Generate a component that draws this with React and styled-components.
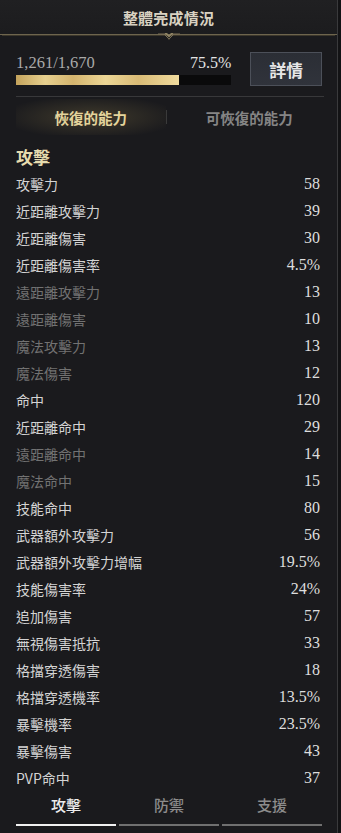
import React from "react";
import styled, { createGlobalStyle } from "styled-components";

const GlobalStyle = createGlobalStyle`
  html, body { margin: 0; padding: 0; background: #131315; }
  body { font-family: "Noto Sans CJK TC", "Noto Sans", sans-serif; }
  * { box-sizing: border-box; }
`;

const Panel = styled.div`
  position: relative;
  width: 338px;
  height: 833px;
  background: #1a1a1d;
  border-right: 1px solid #3a3a3c;
  display: flex;
  flex-direction: column;
  overflow: hidden;
`;

const Corner = styled.div`
  position: absolute;
  top: 0;
  ${(p) => (p.$side === "left" ? "left: 0;" : "right: 0;")}
  width: 0;
  height: 0;
  border-top: 6px solid #8a7f62;
  ${(p) =>
    p.$side === "left"
      ? "border-right: 6px solid transparent;"
      : "border-left: 6px solid transparent;"}
`;

const Header = styled.div`
  position: relative;
  height: 35px;
  flex: none;
  display: flex;
  align-items: center;
  justify-content: center;
  background: linear-gradient(#202022, #1c1c1e);
  border-bottom: 1px solid #6e654e;
  box-shadow: 0 3px 0 -2px #3c372b;
`;

const Title = styled.div`
  font-size: 15px;
  font-weight: 700;
  color: #d9d2c2;
  letter-spacing: 0.2px;
`;

const Ornament = styled.svg`
  position: absolute;
  left: 158px;
  bottom: -8px;
`;

const ProgressSection = styled.div`
  flex: none;
  display: flex;
  align-items: center;
  padding: 17px 15px 0 16px;
  gap: 19px;
`;

const ProgressInfo = styled.div`
  width: 216px;
  display: flex;
  flex-direction: column;
`;

const ProgressTop = styled.div`
  display: flex;
  justify-content: space-between;
  align-items: baseline;
  font-family: "Liberation Serif", "Times New Roman", serif;
  font-size: 16.5px;
  line-height: 18px;
`;

const Count = styled.span`
  color: #a9a9a9;
`;

const Percent = styled.span`
  color: #e4e4e4;
  font-size: 16px;
`;

const Bar = styled.div`
  margin-top: 3px;
  height: 10px;
  background: #0a0a0b;
`;

const BarFill = styled.div`
  height: 100%;
  background: linear-gradient(
    90deg,
    #c4a35c 0%,
    #e7d08f 18%,
    #d4b46e 35%,
    #ecd696 55%,
    #d9bb76 75%,
    #f0db9d 100%
  );
`;

const DetailButton = styled.button`
  width: 72px;
  height: 34px;
  border: 1px solid #4c5059;
  background: linear-gradient(#2b2e35, #30333b);
  color: #e6e6e6;
  font-family: "Noto Sans CJK TC", sans-serif;
  font-size: 17px;
  font-weight: 700;
  padding: 0;
`;

const Divider = styled.div`
  flex: none;
  height: 1px;
  margin: 10px 13px 0 16px;
  background: #38383a;
`;

const TopTabs = styled.div`
  flex: none;
  display: flex;
  align-items: center;
  height: 36px;
  margin: 2px 13px 0 16px;
`;

const TopTab = styled.div`
  flex: 1;
  height: 100%;
  display: flex;
  align-items: center;
  justify-content: center;
  font-size: 14.5px;
  font-weight: 700;
  color: ${(p) => (p.$active ? "#e4d49c" : "#858585")};
  background: ${(p) =>
    p.$active
      ? "radial-gradient(ellipse 60% 60% at 50% 50%, rgba(195,170,95,0.22), rgba(195,170,95,0) 100%)"
      : "none"};
  padding-left: ${(p) => (p.$active ? "0" : "8px")};
`;

const TabSep = styled.div`
  width: 1px;
  height: 14px;
  background: #3a3a3a;
`;

const List = styled.div`
  flex: 1;
  overflow: hidden;
  padding: 10px 17px 0 16px;
`;

const SectionTitle = styled.div`
  height: 25.5px;
  padding-bottom: 2px;
  display: flex;
  align-items: center;
  font-size: 17px;
  font-weight: 700;
  color: #e6dcae;
`;

const Row = styled.div`
  height: 27px;
  display: flex;
  align-items: center;
  justify-content: space-between;
`;

const Label = styled.span`
  font-size: 14px;
  color: ${(p) => (p.$dim ? "#727272" : "#d4d4d4")};
`;

const Value = styled.span`
  font-family: "Liberation Serif", "Times New Roman", serif;
  font-size: 16px;
  color: #dedede;
`;

const BottomTabs = styled.div`
  flex: none;
  height: 47px;
  display: flex;
  gap: 3px;
  padding: 0 15px 7px 16px;
`;

const BottomTab = styled.div`
  flex: 1;
  display: flex;
  align-items: center;
  justify-content: center;
  font-size: 15px;
  font-weight: 500;
  color: ${(p) => (p.$active ? "#ededed" : "#8c8c8c")};
  border-bottom: 2px solid ${(p) => (p.$active ? "#f0f0f0" : "#707070")};
  padding-bottom: 1px;
`;

const stats = [
  ["攻擊力", "58"],
  ["近距離攻擊力", "39"],
  ["近距離傷害", "30"],
  ["近距離傷害率", "4.5%"],
  ["遠距離攻擊力", "13", true],
  ["遠距離傷害", "10", true],
  ["魔法攻擊力", "13", true],
  ["魔法傷害", "12", true],
  ["命中", "120"],
  ["近距離命中", "29"],
  ["遠距離命中", "14", true],
  ["魔法命中", "15", true],
  ["技能命中", "80"],
  ["武器額外攻擊力", "56"],
  ["武器額外攻擊力增幅", "19.5%"],
  ["技能傷害率", "24%"],
  ["追加傷害", "57"],
  ["無視傷害抵抗", "33"],
  ["格擋穿透傷害", "18"],
  ["格擋穿透機率", "13.5%"],
  ["暴擊機率", "23.5%"],
  ["暴擊傷害", "43"],
  ["PVP命中", "37"],
];

export default function App() {
  const pct = 75.5;
  return (
    <>
      <GlobalStyle />
      <Panel>
        <Corner $side="left" />
        <Corner $side="right" />
        <Header>
          <Title>整體完成情況</Title>
          <Ornament width="22" height="10" viewBox="0 0 22 10">
            <path d="M0 2 L6 2 L11 7 L16 2 L22 2" fill="none" stroke="#7a6f55" strokeWidth="1" />
            <path d="M6 1 L11 5.5 L16 1 L13 1 L11 3 L9 1 Z" fill="#8f8363" />
            <path d="M9 5 L11 8 L13 5 L11 6.5 Z" fill="#6f664f" />
          </Ornament>
        </Header>
        <ProgressSection>
          <ProgressInfo>
            <ProgressTop>
              <Count>1,261/1,670</Count>
              <Percent>75.5%</Percent>
            </ProgressTop>
            <Bar>
              <BarFill style={{ width: `${pct}%` }} />
            </Bar>
          </ProgressInfo>
          <DetailButton>詳情</DetailButton>
        </ProgressSection>
        <Divider />
        <TopTabs>
          <TopTab $active>恢復的能力</TopTab>
          <TabSep />
          <TopTab>可恢復的能力</TopTab>
        </TopTabs>
        <List>
          <SectionTitle>攻擊</SectionTitle>
          {stats.map(([label, value, dim]) => (
            <Row key={label}>
              <Label $dim={dim}>{label}</Label>
              <Value>{value}</Value>
            </Row>
          ))}
        </List>
        <BottomTabs>
          <BottomTab $active>攻擊</BottomTab>
          <BottomTab>防禦</BottomTab>
          <BottomTab>支援</BottomTab>
        </BottomTabs>
      </Panel>
    </>
  );
}
